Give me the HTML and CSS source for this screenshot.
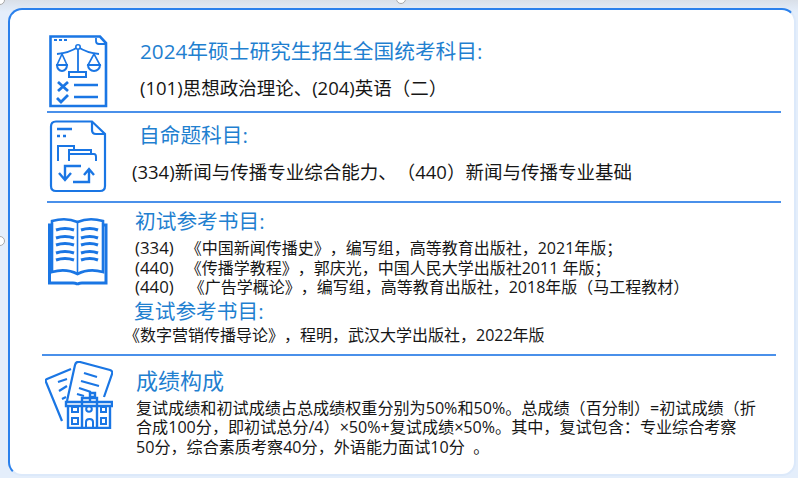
FILE: index.html
```html
<!DOCTYPE html>
<html lang="zh-CN">
<head>
<meta charset="utf-8">
<title>考试科目</title>
<link rel="stylesheet" href="styles.css">
</head>
<body>
<span class="handle handle-tl"></span>
<span class="handle handle-tm"></span>
<span class="handle handle-ml"></span>
<main class="card">
  <section class="sec sec-a">
    <svg class="icon" width="59" height="73" viewBox="0 0 59 73" fill="none" stroke="#1a76e4" stroke-width="2">
      <path d="M1.500 1.500H51L57 8V71H1.500Z" stroke-width="2.600"/>
      <path d="M47 3V6Q47 9 50 9H56" stroke-width="1.800"/>
      <path d="M5 5H8M10 5H13M15 5H18" stroke-width="2"/>
      <path d="M29 12V38M8 19Q20 18 29 12Q38 18 50 19" stroke-width="1.800"/>
      <circle cx="29" cy="12" r="2.200" fill="#fff" stroke-width="1.600"/>
      <path d="M13 19L8 30H18ZM45 19L39 30H51Z" stroke-width="1.600"/>
      <path d="M8 30A5 6 0 0 0 18 30ZM39 30A6 6 0 0 0 51 30Z" stroke-width="2"/>
      <path d="M20 37H37V42H20Z" stroke-width="2"/>
      <path d="M9 47L19 56M19 47L9 56" stroke-width="2.800"/>
      <path d="M8 63L12 67L19 60" stroke-width="2.800"/>
      <path d="M25 50H49M25 62H49" stroke-width="2.400"/>
    </svg>
    <div class="body">
      <h2 class="head head-a">2024年硕士研究生招生全国统考科目:</h2>
      <p class="line-a">(101)思想政治理论、(204)英语（二）</p>
    </div>
  </section>
  <hr class="rule">
  <section class="sec sec-b">
    <svg class="icon" width="58" height="73" viewBox="0 0 58 73" fill="none" stroke="#1a76e4" stroke-width="2.200">
      <path d="M7 1.500H43L56 14V66Q56 71 51 71H7Q2 71 2 66V6.500Q2 1.500 7 1.500Z"/>
      <path d="M43 2V10Q43 14 47 14H55"/>
      <path d="M8 9H23M8 16H11M14 16H17" stroke-width="2.400"/>
      <path d="M9 41V26H25V30M25 30H20V41M20 34H45Q47 34 47 37V41M25 30H42V34" stroke-width="2"/>
      <path d="M32 46H16V60M10 53L16 60L22 53" stroke-width="2.400"/>
      <path d="M24 62H40V50M35 55L40 49L45 55" stroke-width="2.400"/>
    </svg>
    <div class="body">
      <h2 class="head head-b">自命题科目:</h2>
      <p class="line-b">(334)新闻与传播专业综合能力、（440）新闻与传播专业基础</p>
    </div>
  </section>
  <hr class="rule">
  <section class="sec sec-c">
    <svg class="icon" width="60" height="69" viewBox="0 0 60 69" fill="none" stroke="#1a76e4" stroke-width="2.600">
      <path d="M4 8H1.500V66H25Q29 66 29.500 68Q30 66 34 66H58V8H55" stroke-width="3"/>
      <path d="M4 4Q18 0 29.500 5Q41 0 55 4V55Q41 51 29.500 57Q18 51 4 55Z"/>
      <path d="M29.500 5V57" stroke-width="1.600"/>
      <path d="M8 13Q17 10 26 13M8 21Q17 18 26 21M8 28Q17 25 26 28M8 36Q17 33 26 36M8 43Q17 40 26 43M33 13Q42 10 50 13M33 21Q42 18 50 21M33 28Q42 25 50 28M33 36Q42 33 50 36M33 43Q42 40 50 43" stroke-width="3"/>
    </svg>
    <div class="body">
      <h2 class="head head-c">初试参考书目:</h2>
      <p class="book"><span class="code">(334)</span>《中国新闻传播史》，编写组，高等教育出版社，2021年版；</p>
      <p class="book"><span class="code">(440)</span>《传播学教程》，郭庆光，中国人民大学出版社2011 年版；</p>
      <p class="book"><span class="code code-wide">(440)</span>《广告学概论》，编写组，高等教育出版社，2018年版（马工程教材）</p>
      <h2 class="head head-d">复试参考书目:</h2>
      <p class="book book-2">《数字营销传播导论》，程明，武汉大学出版社，2022年版</p>
    </div>
  </section>
  <hr class="rule rule-d">
  <section class="sec sec-d">
    <svg class="icon" width="68" height="68" viewBox="0 0 68 68" fill="none" stroke="#1a76e4" stroke-width="2.200">
      <path d="M26 8L2 18Q0 19 1 21L17 60"/>
      <path d="M22 40L30 4Q31 0 35 1L65 9Q68 10 67 13L59 36"/>
      <path d="M13 21L22 18M14 30L22 25M17 38L21 36M39 12L52 16M36 20L54 25M34 27L46 31M32 33L39 35"/>
      <path d="M45 37V32H50V36H45M45 37V40M37 42V37H52V42M21 41H67V45H21ZM23 45V67H65V45M37 42V67M52 42V67" stroke-width="2.400"/>
      <path d="M27 46H33V51H27ZM27 57H33V63H27ZM56 46H61V51H56ZM56 57H61V63H56Z" stroke-width="2"/>
      <circle cx="44" cy="48" r="2.800" stroke-width="2"/>
      <path d="M41 67V61Q41 58 44.500 58Q48 58 48 61V67" stroke-width="2"/>
    </svg>
    <div class="body">
      <h2 class="head head-e">成绩构成</h2>
      <p class="score">复试成绩和初试成绩占总成绩权重分别为50%和50%。总成绩（百分制）=初试成绩（折合成100分，即初试总分/4）×50%+复试成绩×50%。其中，复试包含：专业综合考察<br>50分，综合素质考察40分，外语能力面试10分 &nbsp;。</p>
    </div>
  </section>
</main>
</body>
</html>
```

FILE: styles.css
```css
* { box-sizing: border-box; }
html, body { margin: 0; height: 100%; }
body {
  width: 798px;
  height: 478px;
  overflow: hidden;
  padding: 8px 2px 2px 8px;
  position: relative;
  background: linear-gradient(#d9dfe8, #e4eefb 12px);
  font-family: "Open Sans", "Noto Sans CJK SC", sans-serif;
  color: #161616;
  text-spacing-trim: space-all;
}
.handle {
  position: absolute;
  width: 10px;
  height: 10px;
  border: 1.500px solid #a8a8a8;
  border-radius: 50%;
  background: #fff;
}
.handle-tl { left: -5px; top: -5px; }
.handle-tm { left: 396px; top: -6px; }
.handle-ml { left: -5px; top: 236px; }
.card {
  height: 468px;
  background: #fff;
  border: 2px solid #2a80ec;
  border-bottom-color: #dce9fa;
  border-right-color: #dce9fa;
  border-radius: 14px;
  display: flex;
  flex-direction: column;
}
.sec { display: flex; }
.icon { flex: none; display: block; }
.body { display: flex; flex-direction: column; }
h2, p { margin: 0; font-weight: 400; }
.head { font-size: 20.700px; color: #1f80d0; line-height: 26px; }
.rule {
  border: 0;
  height: 2px;
  margin: 0 13px 0 37px;
  background: #4a90ea;
  flex: none;
}
.rule-d { margin: 0 18px 0 32px; height: 1.500px; }
.sec-a { height: 101px; padding: 25px 0 0 39px; }
.sec-a .body { margin-left: 32px; }
.head-a { margin-top: 3px; }
.line-a { font-size: 18.500px; line-height: 24px; margin-top: 12px; }
.sec-b { height: 88px; padding: 7px 0 0 39px; }
.sec-b .body { margin-left: 24px; }
.head-b { margin: 2px 0 0 8px; }
.line-b { font-size: 18.500px; line-height: 24px; margin: 12px 0 0 1px; }
.sec-c { height: 151px; padding: 14px 0 0 38px; }
.sec-c .body { margin-left: 27px; }
.head-c { margin-top: -9px; margin-bottom: 5px; }
.book { font-size: 16px; line-height: 19.500px; white-space: nowrap; }
.code { font-size: 16.800px; line-height: 1; margin-right: 12px; }
.code-wide { margin-right: 15px; }
.head-d { margin-top: 0; margin-left: -1px; }
.book-2 { margin-left: -11px; margin-top: 2px; }
.sec-d { padding: 5px 0 0 35px; }
.sec-d .body { margin-left: 23px; width: 625px; }
.head-e { font-size: 22px; margin-top: 6px; }
.score { font-size: 16.100px; line-height: 19.500px; margin-top: 6px; }
```
